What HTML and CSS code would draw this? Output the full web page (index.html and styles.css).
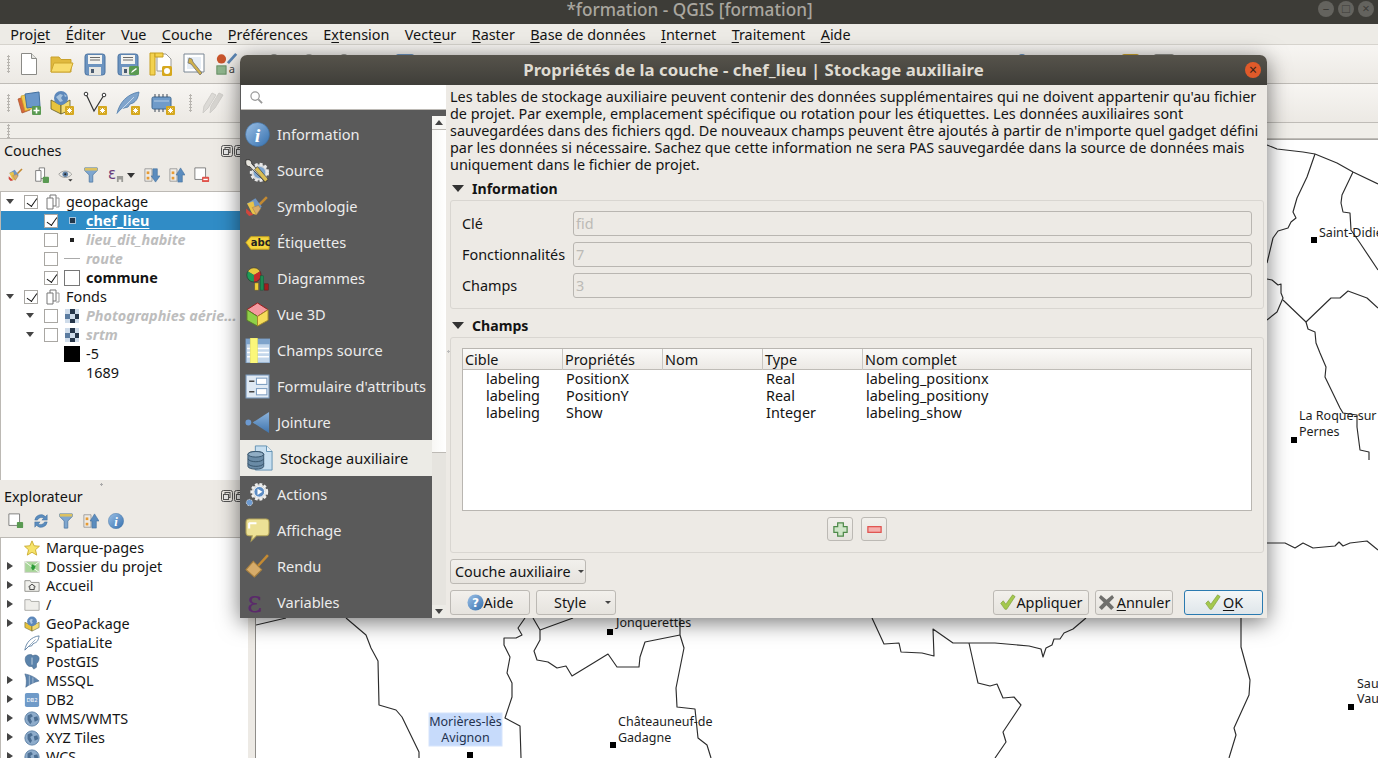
FILE: index.html
```html
<!DOCTYPE html>
<html lang="fr">
<head>
<meta charset="utf-8">
<title>*formation - QGIS [formation]</title>
<link rel="stylesheet" href="styles.css">
</head>
<body>
<svg class="defs" aria-hidden="true">
  <defs>
    <linearGradient id="gBlue" x1="0" y1="0" x2="0" y2="1"><stop offset="0" stop-color="#8db4dc"/><stop offset="1" stop-color="#3f74ad"/></linearGradient>
    <linearGradient id="gInfo" x1="0" y1="0" x2="1" y2="1"><stop offset="0" stop-color="#9cc0e6"/><stop offset="1" stop-color="#3570ae"/></linearGradient>
    <symbol id="i-new" viewBox="0 0 24 24"><path d="M4.500 1.500h10l5 5v16h-15z" fill="#fff" stroke="#8a8a86"/><path d="M14.500 1.500v5h5" fill="#e4e4e0" stroke="#8a8a86"/></symbol>
    <symbol id="i-open" viewBox="0 0 24 24"><path d="M1 20V5h8l2 2.500h10V20z" fill="#e0b93e" stroke="#c9a12c"/><path d="M1 20l3-9h19l-3 9z" fill="#f8dc6c" stroke="#cda62f"/></symbol>
    <symbol id="i-save" viewBox="0 0 24 24"><rect x="2" y="2" width="20" height="21" rx="2.500" fill="#6d94c0" stroke="#4b73a0"/><rect x="5" y="3" width="14" height="9" fill="#f3f3f0"/><path d="M7 5.500h10M7 8h10" stroke="#6a6a6a"/><rect x="6" y="15" width="12" height="8" fill="#e6e6e2"/><rect x="8" y="17" width="3" height="4" fill="#4a5b70"/></symbol>
    <symbol id="i-saveas" viewBox="0 0 24 24"><use href="#i-save"/><rect x="13" y="14" width="10" height="9" rx="1.500" fill="#5a9a52"/><path d="M15 21l1-2 4-3 1 1-4 3z" fill="#fff"/></symbol>
    <symbol id="i-layout" viewBox="0 0 24 24"><path d="M8 2h9l5 5v12H8z" fill="#fff" stroke="#9a9a96"/><path d="M1 1h5v22H1z" fill="#f3d250" stroke="#c69f20"/><path d="M6 1h8v4H6z" fill="#f3d250" stroke="#c69f20"/><rect x="13" y="14" width="10" height="10" rx="1.500" fill="#d6a81e"/><circle cx="18" cy="19" r="3" fill="#fff"/></symbol>
    <symbol id="i-style" viewBox="0 0 24 24"><path d="M2 2h20v18H2z" fill="#fff" stroke="#7b8794"/><path d="M5 5h14v12H5z" fill="#e6edf5"/><path d="M7 6l3 1 1 3 9 11-2 2-9-11-3-1z" fill="#cfb04c" stroke="#6a6a6a" stroke-width=".7"/></symbol>
    <symbol id="i-styleman" viewBox="0 0 26 24"><circle cx="7" cy="6.500" r="5" fill="#c9552c"/><path d="M14 11L23 1" stroke="#5b86b5" stroke-width="3"/><rect x="2" y="14" width="10" height="9" fill="#8fb58d" stroke="#5f8a5d"/><text x="15" y="22" font-size="12" fill="#444" font-family="Noto Sans, sans-serif">a</text></symbol>
    <symbol id="i-addlayer" viewBox="0 0 24 24"><path d="M1 8l8-3 4 14-8 3z" fill="#d6693a" stroke="#a84e26" stroke-width=".7"/><path d="M4 5l9-2 4 14-9 3z" fill="#f2c94f" stroke="#c89f24" stroke-width=".7"/><path d="M8 3l14-2 1 14-13 2z" fill="#6a97c9" stroke="#44719f"/><rect x="15" y="15" width="9" height="9" rx="1" fill="#5a9a52"/><path d="M19.500 16.500v6M16.500 19.500h6" stroke="#fff" stroke-width="1.600"/></symbol>
    <symbol id="i-ds" viewBox="0 0 24 24"><path d="M1 9l10 5v9L1 18z" fill="#e7c33d" stroke="#5f5a2a" stroke-width=".8"/><path d="M11 14l9-5v10l-9 4z" fill="#f3dc74" stroke="#5f5a2a" stroke-width=".8"/><circle cx="11" cy="7" r="7" fill="#5d88bb"/><path d="M6 6l4-3 3 1-2 3 2 3-3 1zM14 3l3 2-2 1z" fill="#a7c3de"/><rect x="15" y="15" width="9" height="9" rx="1" fill="#d6a81e"/><path d="M17 19.500h5M19.500 17v5M17.500 17.500l4 4M21.500 17.500l-4 4" stroke="#fff"/></symbol>
    <symbol id="i-vertex" viewBox="0 0 24 24"><path d="M3 3l8 17L21 4" fill="none" stroke="#333" stroke-width="1.200"/><circle cx="3" cy="3" r="1.800" fill="#fff" stroke="#333"/><circle cx="21" cy="4" r="1.800" fill="#fff" stroke="#333"/><rect x="15" y="15" width="9" height="9" rx="1" fill="#d6a81e"/><path d="M17 19.500h5M19.500 17v5M17.500 17.500l4 4M21.500 17.500l-4 4" stroke="#fff"/></symbol>
    <symbol id="i-feather" viewBox="0 0 24 24"><path d="M1 23C3 12 11 3 23 1c-1 7-3 9-6 11l-3 1-2 3-4 1-3 1z" fill="#7fa4cc" stroke="#4e7aa8" stroke-width=".8"/><path d="M1 23L18 6" stroke="#e5eef7" stroke-width=".7"/><rect x="15" y="15" width="9" height="9" rx="1" fill="#d6a81e"/><path d="M17 19.500h5M19.500 17v5M17.500 17.500l4 4M21.500 17.500l-4 4" stroke="#fff"/></symbol>
    <symbol id="i-chip" viewBox="0 0 24 24"><rect x="1" y="6" width="19" height="12" rx="1.500" fill="#6f9bc9" stroke="#3e678f"/><path d="M4 3v3M8 3v3M12 3v3M16 3v3M4 18v3M8 18v3M12 18v3" stroke="#3e4a58"/><path d="M3 10h15" stroke="#b5cde5"/><rect x="15" y="15" width="9" height="9" rx="1" fill="#d6a81e"/><path d="M17 19.500h5M19.500 17v5M17.500 17.500l4 4M21.500 17.500l-4 4" stroke="#fff"/></symbol>
    <symbol id="i-pencils" viewBox="0 0 24 24"><path d="M2 22l1-7L11 2l4 2-8 13z" fill="#dcdad6" stroke="#cfcdc9"/><path d="M9 22l1-7L18 2l4 2-8 13z" fill="#d6d4d0" stroke="#cfcdc9"/></symbol>
    <symbol id="i-brush" viewBox="0 0 24 24"><path d="M12 12L21 3" stroke="#c48a32" stroke-width="2.400"/><path d="M2 9l8-5 6 8-5 8z" fill="#6f95c2"/><path d="M2 9l5 10 4 1-3-13z" fill="#e8c34a"/><path d="M1 14l7 6-4 1-3-3z" fill="#d1463c"/><path d="M7 13l6-2 2 3-4 6z" fill="#d7ac6a" stroke="#a67d3e" stroke-width=".5"/></symbol>
    <symbol id="i-group" viewBox="0 0 16 16"><path d="M6 1h6v11H6z" fill="#fff" stroke="#777"/><path d="M3 4h6v11H3z" fill="#fff" stroke="#777"/><path d="M12 4h3v9h-3" fill="none" stroke="#999"/></symbol>
    <symbol id="i-groupadd" viewBox="0 0 18 18"><path d="M7 1h6v12H7z" fill="#fff" stroke="#777"/><path d="M3 4h6v12H3z" fill="#fff" stroke="#777"/><rect x="11" y="11" width="7" height="7" rx="1" fill="#5a9a52"/></symbol>
    <symbol id="i-eye" viewBox="0 0 22 18"><path d="M1 8c5-6 13-6 18 0-5 6-13 6-18 0z" fill="#e9e9e6" stroke="#8a8a86"/><circle cx="10" cy="8" r="3.800" fill="#5c7ea3"/><circle cx="10" cy="8" r="1.500" fill="#222"/><path d="M14 15h6l-3 3z" fill="#333"/></symbol>
    <symbol id="i-filter" viewBox="0 0 16 18"><path d="M1 1h14v3l-5 5v8H6V9L1 4z" fill="#7ea6cf" stroke="#557ea8"/><path d="M1 1h14v3H1z" fill="#dcc160"/></symbol>
    <symbol id="i-eps" viewBox="0 0 18 18"><text x="0" y="13" font-size="17" fill="#6a3d7c" font-family="DejaVu Sans, sans-serif">ε</text><path d="M10 10h7v7h-2v-3h-3v3h-2z" fill="#9a9a96"/></symbol>
    <symbol id="i-expand" viewBox="0 0 18 18"><path d="M1 2h8v14H1z" fill="none" stroke="#999"/><rect x="3" y="5" width="3" height="3" fill="#e89b33"/><rect x="3" y="11" width="3" height="3" fill="#e89b33"/><path d="M10 2h5v8h3l-5 7-5-7h2z" fill="#5b8cbe" stroke="#3b6a99" stroke-width=".6"/></symbol>
    <symbol id="i-collapse" viewBox="0 0 18 18"><path d="M1 2h8v14H1z" fill="none" stroke="#999"/><rect x="3" y="5" width="3" height="3" fill="#e89b33"/><rect x="3" y="11" width="3" height="3" fill="#e89b33"/><path d="M10 17h5V9h3l-5-8-5 8h2z" fill="#5b8cbe" stroke="#3b6a99" stroke-width=".6"/></symbol>
    <symbol id="i-rm" viewBox="0 0 18 18"><path d="M1 1h12v13H1z" fill="#fff" stroke="#777"/><rect x="9" y="11" width="8" height="6" rx="1" fill="#e0534b"/><path d="M10.500 14h5" stroke="#fff" stroke-width="1.500"/></symbol>
    <symbol id="i-addnew" viewBox="0 0 18 18"><path d="M1 1h12v13H1z" fill="#fff" stroke="#777"/><rect x="10" y="10" width="7" height="7" rx="1" fill="#5a9a52"/></symbol>
    <symbol id="i-refresh" viewBox="0 0 18 18"><path d="M2 8a7 7 0 0 1 12-4l2-2v6h-6l2-2a4.500 4.500 0 0 0-7 2zM16 10a7 7 0 0 1-12 4l-2 2v-6h6l-2 2a4.500 4.500 0 0 0 7-2z" fill="#5b8cbe" stroke="#3b6a99" stroke-width=".5"/></symbol>
    <symbol id="i-infos" viewBox="0 0 24 24"><circle cx="12" cy="12" r="11.500" fill="url(#gInfo)" stroke="#3e6f9f" stroke-width=".6"/><text x="12" y="19" text-anchor="middle" font-size="19" font-weight="700" font-style="italic" fill="#fff" font-family="Liberation Serif, serif">i</text></symbol>
    <symbol id="i-source" viewBox="0 0 26 26"><circle cx="15" cy="15" r="8.500" fill="#cfd3d6" stroke="#e9e9e9" stroke-width="3" stroke-dasharray="3 2"/><circle cx="15" cy="15" r="6" fill="#7da5cf"/><path d="M1 2c4-1 6 1 6 4l16 17-2 2L5 9C2 9 0 7 1 2z" fill="#e6e4dd" stroke="#222" stroke-width=".8"/><path d="M10 12l3-3 11 13-3 3z" fill="#d9bd53" stroke="#333" stroke-width=".6"/></symbol>
    <symbol id="i-abc" viewBox="0 0 26 16"><path d="M1 8l5-6h19v13H6z" fill="#f4d53c" stroke="#caa61d"/><text x="6" y="12" font-size="10.500" font-weight="700" fill="#222" font-family="DejaVu Sans, sans-serif">abc</text></symbol>
    <symbol id="i-diag" viewBox="0 0 26 28"><path d="M9 10L2 6a8 8 0 0 1 14 0z" fill="#e9c93e"/><path d="M9 10v8a8 8 0 0 1-7-12z" fill="#1e9a58"/><path d="M9 10l7-4a8 8 0 0 1-7 12z" fill="#c62b2b"/><circle cx="9" cy="10" r="8" fill="none" stroke="#222" stroke-width=".6"/><rect x="10" y="19" width="4" height="8" fill="#efce38" stroke="#7a6a1c" stroke-width=".5"/><rect x="16" y="11" width="4" height="16" fill="#1f8a52" stroke="#125533" stroke-width=".5"/><rect x="21" y="20" width="4" height="7" fill="#a31d1d" stroke="#5e1010" stroke-width=".5"/></symbol>
    <symbol id="i-cube" viewBox="0 0 24 26"><path d="M12 1l11 7-11 7L1 8z" fill="#f59aa0" stroke="#a01c1c"/><path d="M1 8l11 7v10L1 19z" fill="#8fd048" stroke="#5a7f26"/><path d="M23 8L12 15v10l11-6z" fill="#f5dc5a" stroke="#a0882c"/></symbol>
    <symbol id="i-fields" viewBox="0 0 24 24"><rect x="1" y="1" width="23" height="23" fill="#c4d7eb" stroke="#7597bd"/><rect x="1" y="1" width="23" height="5" fill="#7ea3cb"/><path d="M2 10h21M2 14h21M2 18h21" stroke="#fff" stroke-width="1.400"/><rect x="5" y="0" width="7" height="25" fill="#fbf77a" stroke="#e3dc55" stroke-width=".5"/></symbol>
    <symbol id="i-form" viewBox="0 0 24 24"><rect x="1" y="1" width="22" height="22" fill="#dfe9f3" stroke="#7c9dc0"/><rect x="11" y="4" width="10" height="6" fill="#fff" stroke="#7c9dc0"/><rect x="11" y="14" width="10" height="6" fill="#fff" stroke="#7c9dc0"/><path d="M4 7h5M4 17h5" stroke="#444" stroke-width="1.500"/></symbol>
    <symbol id="i-join" viewBox="0 0 26 24"><circle cx="3.500" cy="12" r="3" fill="#6d9ad0"/><path d="M25 1v22L8 12z" fill="url(#gBlue)"/></symbol>
    <symbol id="i-aux" viewBox="0 0 28 28"><path d="M9 1h12l6 6v20H9z" fill="#c7dff0" stroke="#5f8fb0"/><path d="M21 1v6h6" fill="#e8f2f8" stroke="#5f8fb0"/><path d="M1 10c0-4 17-4 17 0v13c0 4-17 4-17 0z" fill="#6a8ba6" stroke="#35526a"/><ellipse cx="9.500" cy="10" rx="8.500" ry="3" fill="#90adc4" stroke="#35526a"/><path d="M1 15c2 4 15 4 17 0M1 20c2 4 15 4 17 0" fill="none" stroke="#35526a"/></symbol>
    <symbol id="i-actions" viewBox="0 0 26 28"><circle cx="15" cy="11" r="8.500" fill="#d6d6d3" stroke="#efefef" stroke-width="3" stroke-dasharray="3 2"/><circle cx="15" cy="11" r="6" fill="#5c8cc4" stroke="#fff"/><path d="M13 7.500v7l5.500-3.500z" fill="#fff"/><circle cx="4" cy="23" r="3.500" fill="#6d9ad0" stroke="#cfd3d6" stroke-dasharray="2 1"/></symbol>
    <symbol id="i-bubble" viewBox="0 0 24 24"><path d="M4 1h16c2 0 3 1 3 3v10c0 2-1 3-3 3H11l-5 5 1-5H4c-2 0-3-1-3-3V4c0-2 1-3 3-3z" fill="#ece196" stroke="#b5a65a"/><path d="M4 4h7v2H5v4H3V5z" fill="#fff"/></symbol>
    <symbol id="i-broom" viewBox="0 0 24 24"><path d="M12 12L22 1" stroke="#c48a32" stroke-width="2.400"/><path d="M1 15l7-8 8 8-7 7z" fill="#d7ac6a" stroke="#a9803f"/></symbol>
    <symbol id="i-eps2" viewBox="0 0 24 24"><text x="2" y="21" font-size="28" fill="#5a2a6a" font-family="DejaVu Serif, serif">ε</text></symbol>
    <symbol id="i-star" viewBox="0 0 18 18"><path d="M9 1l2.400 5.500 6 .5-4.500 4 1.400 6L9 13.800 3.700 17l1.400-6L.6 7l6-.5z" fill="#f6e36a" stroke="#c9a92c"/></symbol>
    <symbol id="i-projdir" viewBox="0 0 18 18"><rect x="1" y="3" width="16" height="12" fill="#a9d69a" stroke="#cfcfc9"/><path d="M1 3l16 12M17 3L9 9" stroke="#fff"/><path d="M9 6l4 2-1 3-2 2-2-3z" fill="#2d9a3a"/></symbol>
    <symbol id="i-home" viewBox="0 0 18 18"><path d="M1 15V3h6l1 2h9v10z" fill="#f0f0ec" stroke="#8d8d88"/><path d="M5 10l4-3 4 3M6.500 9.500V13h5V9.500" fill="none" stroke="#333"/></symbol>
    <symbol id="i-folder" viewBox="0 0 18 18"><path d="M1 15V3h6l1 2h9v10z" fill="#efeeea" stroke="#a7a7a2"/></symbol>
    <symbol id="i-gpkg" viewBox="0 0 18 18"><path d="M1 7l8 4v6l-8-4z" fill="#e7c33d" stroke="#5f5a2a" stroke-width=".6"/><path d="M9 11l8-4v6l-8 4z" fill="#f3dc74" stroke="#5f5a2a" stroke-width=".6"/><circle cx="9" cy="6" r="5.500" fill="#5d88bb"/><path d="M6 5l2-2 2 1-1 2 1 2-2 1z" fill="#a7c3de"/></symbol>
    <symbol id="i-spatial" viewBox="0 0 18 18"><path d="M1 17C2 9 8 2 17 1c-1 5-2 7-5 8l-2 1-1 2-4 1z" fill="#fff" stroke="#5d7fa3"/><path d="M1 17L13 5" stroke="#5d7fa3" stroke-width=".7"/></symbol>
    <symbol id="i-pg" viewBox="0 0 18 18"><path d="M2 3c2-3 7-3 8-1 3-2 7 0 7 3 0 3-2 5-3 6v4l-3 2-2-3H6C3 13 0 7 2 3z" fill="#5b83ab" stroke="#3d5f83" stroke-width=".6"/><path d="M9 4v8" stroke="#cfdae5"/></symbol>
    <symbol id="i-mssql" viewBox="0 0 18 18"><path d="M1 1c6 1 12 4 16 8-5 1-11 4-15 7 1-5 1-10-1-15z" fill="#5d84ad" stroke="#3e6188" stroke-width=".6"/><path d="M6 3v11M10 5v7" stroke="#cdd9e5" stroke-width=".7"/></symbol>
    <symbol id="i-db2" viewBox="0 0 18 18"><rect x="1" y="1" width="16" height="16" rx="2" fill="#6f9ac8"/><text x="9" y="11.500" text-anchor="middle" font-size="6" fill="#fff" font-family="DejaVu Sans, sans-serif">DB2</text></symbol>
    <symbol id="i-globe" viewBox="0 0 18 18"><circle cx="9" cy="9" r="8" fill="#8eaccb" stroke="#567ca3"/><path d="M4 5l4-2 2 3-3 2 2 4-2 3-3-5zM11 7l4-1 1 4-4 2z" fill="#4c6e92"/></symbol>
    <symbol id="i-ok" viewBox="0 0 20 20"><path d="M2 11l3-3 3 4 8-11 3 2-10 15h-2z" fill="#a4c84e" stroke="#7a9a36" stroke-width=".7"/></symbol>
    <symbol id="i-x" viewBox="0 0 18 18"><path d="M3 1l6 5 6-5 2 3-5 5 5 5-3 3-5-5-5 5-3-3 5-5-5-5z" fill="#6f6f6c"/></symbol>
    <symbol id="i-help" viewBox="0 0 18 18"><circle cx="9" cy="9" r="8.500" fill="url(#gInfo)"/><text x="9" y="14" text-anchor="middle" font-size="13" font-weight="700" fill="#fff" font-family="DejaVu Sans, sans-serif">?</text></symbol>
    <symbol id="i-plus" viewBox="0 0 18 18"><path d="M6 2h6v4h4v6h-4v4H6v-4H2V6h4z" fill="#cfe5c8" stroke="#4e8a4a" stroke-width="1.300"/></symbol>
    <symbol id="i-minus" viewBox="0 0 18 18"><rect x="2" y="6" width="14" height="6" fill="#f4b0ae" stroke="#e0504c" stroke-width="1.300"/></symbol>
    <symbol id="i-raster" viewBox="0 0 16 16"><rect x="1" y="1" width="14" height="14" fill="#cfdcea"/><rect x="6" y="1" width="5" height="5" fill="#26364a"/><rect x="1" y="6" width="5" height="5" fill="#5a7ba0"/><rect x="11" y="6" width="4" height="5" fill="#26364a"/><rect x="6" y="11" width="5" height="4" fill="#26364a"/></symbol>
    <symbol id="i-dock" viewBox="0 0 12 12"><rect x=".5" y=".5" width="11" height="11" rx="2" fill="none" stroke="#555"/><rect x="4" y="2.500" width="5" height="5" fill="none" stroke="#555"/><rect x="2.500" y="4.500" width="5" height="5" fill="#eee" stroke="#555"/></symbol>
  </defs>
</svg>

<div class="app">
  <header class="wintitle">
    <span class="wintitle-text">*formation - QGIS [formation]</span>
    <div class="winbtns">
      <span class="winbtn">&#8211;</span><span class="winbtn">&#9633;</span><span class="winbtn">&#215;</span>
    </div>
  </header>

  <nav class="menubar">
    <span class="mi">Proj<u>e</u>t</span>
    <span class="mi"><u>É</u>diter</span>
    <span class="mi">V<u>u</u>e</span>
    <span class="mi"><u>C</u>ouche</span>
    <span class="mi"><u>P</u>références</span>
    <span class="mi">E<u>x</u>tension</span>
    <span class="mi">Vect<u>e</u>ur</span>
    <span class="mi"><u>R</u>aster</span>
    <span class="mi"><u>B</u>ase de données</span>
    <span class="mi"><u>I</u>nternet</span>
    <span class="mi"><u>T</u>raitement</span>
    <span class="mi"><u>A</u>ide</span>
  </nav>

  <div class="toolbar tb1">
    <span class="grip"></span>
    <svg class="tbi"><use href="#i-new"/></svg>
    <svg class="tbi"><use href="#i-open"/></svg>
    <svg class="tbi"><use href="#i-save"/></svg>
    <svg class="tbi"><use href="#i-saveas"/></svg>
    <svg class="tbi"><use href="#i-layout"/></svg>
    <svg class="tbi"><use href="#i-style"/></svg>
    <svg class="tbi"><use href="#i-styleman"/></svg>
    <span class="peek p-a"></span>
    <span class="peek p-b"></span>
    <span class="peek p-c"></span>
    <span class="peek p-d"></span>
    <span class="peek p-e"></span>
    <span class="peek p-f"></span>
    <span class="peek p-g"></span>
  </div>
  <div class="toolbar tb2">
    <span class="grip"></span>
    <svg class="tbi"><use href="#i-addlayer"/></svg>
    <svg class="tbi"><use href="#i-ds"/></svg>
    <svg class="tbi"><use href="#i-vertex"/></svg>
    <svg class="tbi"><use href="#i-feather"/></svg>
    <svg class="tbi chip"><use href="#i-chip"/></svg>
    <span class="grip grip-mid"></span>
    <svg class="tbi"><use href="#i-pencils"/></svg>
  </div>
  <div class="toolbar tb3"><span class="grip"></span></div>

  <main class="workspace">
    <aside class="docks">
      <section class="dock dock-layers">
        <div class="dock-title title-layers"><span>Couches</span><svg class="dockbtn"><use href="#i-dock"/></svg><svg class="dockbtn"><use href="#i-dock"/></svg></div>
        <div class="dock-tools layers-tools">
          <svg class="dti"><use href="#i-brush"/></svg>
          <svg class="dti"><use href="#i-groupadd"/></svg>
          <svg class="dti"><use href="#i-eye"/></svg>
          <svg class="dti"><use href="#i-filter"/></svg>
          <svg class="dti"><use href="#i-eps"/></svg>
          <span class="caret"></span>
          <svg class="dti"><use href="#i-expand"/></svg>
          <svg class="dti"><use href="#i-collapse"/></svg>
          <svg class="dti"><use href="#i-rm"/></svg>
        </div>
        <div class="tree tree-layers">
          <div class="row l0"><span class="arr open"></span><span class="chk on"></span><svg class="ric"><use href="#i-group"/></svg><span>geopackage</span></div>
          <div class="row l1 sel"><span class="arr none"></span><span class="chk on"></span><span class="ric sym"><span class="dot big"></span></span><span class="b u">chef_lieu</span></div>
          <div class="row l1"><span class="arr none"></span><span class="chk"></span><span class="ric sym"><span class="dot"></span></span><span class="off">lieu_dit_habite</span></div>
          <div class="row l1"><span class="arr none"></span><span class="chk"></span><span class="ric sym"><span class="dash"></span></span><span class="off">route</span></div>
          <div class="row l1"><span class="arr none"></span><span class="chk on"></span><span class="ric sym"><span class="poly"></span></span><span class="b">commune</span></div>
          <div class="row l0"><span class="arr open"></span><span class="chk on"></span><svg class="ric"><use href="#i-group"/></svg><span>Fonds</span></div>
          <div class="row l1"><span class="arr open"></span><span class="chk"></span><svg class="ric"><use href="#i-raster"/></svg><span class="off">Photographies aérie...</span></div>
          <div class="row l1"><span class="arr open"></span><span class="chk"></span><svg class="ric"><use href="#i-raster"/></svg><span class="off">srtm</span></div>
          <div class="row l2"><span class="ramp"></span><span>-5</span></div>
          <div class="row l2"><span class="ramp blank"></span><span>1689</span></div>
        </div>
      </section>
      <div class="dock-split"></div>
      <section class="dock dock-browser">
        <div class="dock-title title-browser"><span>Explorateur</span><svg class="dockbtn"><use href="#i-dock"/></svg><svg class="dockbtn"><use href="#i-dock"/></svg></div>
        <div class="dock-tools browser-tools">
          <svg class="dti"><use href="#i-addnew"/></svg>
          <svg class="dti"><use href="#i-refresh"/></svg>
          <svg class="dti"><use href="#i-filter"/></svg>
          <svg class="dti"><use href="#i-collapse"/></svg>
          <svg class="dti"><use href="#i-infos"/></svg>
        </div>
        <div class="tree tree-browser">
          <div class="row l0"><span class="arr none"></span><svg class="ric"><use href="#i-star"/></svg><span>Marque-pages</span></div>
          <div class="row l0"><span class="arr"></span><svg class="ric"><use href="#i-projdir"/></svg><span>Dossier du projet</span></div>
          <div class="row l0"><span class="arr"></span><svg class="ric"><use href="#i-home"/></svg><span>Accueil</span></div>
          <div class="row l0"><span class="arr"></span><svg class="ric"><use href="#i-folder"/></svg><span>/</span></div>
          <div class="row l0"><span class="arr"></span><svg class="ric"><use href="#i-gpkg"/></svg><span>GeoPackage</span></div>
          <div class="row l0"><span class="arr none"></span><svg class="ric"><use href="#i-spatial"/></svg><span>SpatiaLite</span></div>
          <div class="row l0"><span class="arr none"></span><svg class="ric"><use href="#i-pg"/></svg><span>PostGIS</span></div>
          <div class="row l0"><span class="arr"></span><svg class="ric"><use href="#i-mssql"/></svg><span>MSSQL</span></div>
          <div class="row l0"><span class="arr"></span><svg class="ric"><use href="#i-db2"/></svg><span>DB2</span></div>
          <div class="row l0"><span class="arr"></span><svg class="ric"><use href="#i-globe"/></svg><span>WMS/WMTS</span></div>
          <div class="row l0"><span class="arr"></span><svg class="ric"><use href="#i-globe"/></svg><span>XYZ Tiles</span></div>
          <div class="row l0"><span class="arr"></span><svg class="ric"><use href="#i-globe"/></svg><span>WCS</span></div>
        </div>
      </section>
    </aside>
    <div class="vsplit"></div>
    <div class="map">
      <svg class="mapsvg" viewBox="256 140 1122 618" preserveAspectRatio="xMinYMin slice">
        <g class="borders">
          <polyline points="1267,145 1277,149 1303,152 1315,154 1337,163 1353,172 1378,184"/>
          <polyline points="1315,154 1307,177 1297,198 1293,212 1296,218 1291,222 1288,228 1278,231 1273,238 1267,263"/>
          <polyline points="1353,172 1342,195 1341,203 1343,212 1350,213 1351,230 1360,243 1378,270"/>
          <polyline points="1267,279 1272,280 1278,285 1281,284 1281,293 1283,298 1277,312 1267,320"/>
          <polyline points="1283,300 1306,322 1331,298 1340,298 1348,291 1367,298 1378,308"/>
          <polyline points="1306,322 1308,329 1315,332 1316,343 1320,353 1326,367 1325,377 1340,408 1343,413 1357,415 1357,427 1360,450 1369,452 1369,460"/>
          <polyline points="1267,543 1285,543 1295,548 1303,543 1313,548 1335,546 1339,542 1343,546 1350,543 1367,541 1378,550"/>
          <polyline points="872,618 884,644 899,643 901,652 922,653 934,656 933,629 953,643 995,643 1029,646 1041,649 1043,657 1046,648 1052,645 1054,639 1060,639 1064,633 1073,629 1086,618"/>
          <polyline points="969,643 975,670 978,683 990,686 997,684 1003,698 1014,697 1021,705 1003,732 1006,742 995,758"/>
          <polyline points="1241,618 1241,647 1250,680 1249,695 1234,728 1236,735 1229,758"/>
          <polyline points="256,625 286,618"/>
          <polyline points="346,618 366,635 371,648 378,661 379,705 396,710 402,717 419,752 419,758"/>
          <polyline points="525,618 518,628 522,635 516,638 504,638 504,645 510,657 507,673 512,683 512,697 505,718 520,726 521,758"/>
          <polyline points="533,618 540,630 540,640 534,651 537,660 548,662 557,668 566,666 572,676 595,662 608,654 617,667 639,667 640,657 645,642 680,635"/>
          <polyline points="540,630 573,618"/>
          <polyline points="680,618 680,635 684,648 679,673 676,688 677,707 695,709 698,738 707,745 711,758"/>
        </g>
        <rect class="lblbox" x="429" y="713" width="73" height="33"/>
        <g class="pins">
          <rect x="1311" y="237" width="6" height="6"/>
          <rect x="1291" y="437" width="6" height="6"/>
          <rect x="1348" y="704" width="6" height="6"/>
          <rect x="607" y="629" width="6" height="6"/>
          <rect x="610" y="742" width="6" height="6"/>
          <rect x="467" y="752" width="6" height="6"/>
        </g>
        <g class="labels">
          <text x="1319" y="237">Saint-Didier</text>
          <text x="1299" y="420">La Roque-sur</text>
          <text x="1299" y="436">Pernes</text>
          <text x="1357" y="688">Sau</text>
          <text x="1357" y="703">Vau</text>
          <text x="616" y="627">Jonquerettes</text>
          <text x="618" y="726">Châteauneuf-de</text>
          <text x="618" y="742">Gadagne</text>
          <text class="hl" x="465.500" y="726" text-anchor="middle">Morières-lès</text>
          <text class="hl" x="465.500" y="742" text-anchor="middle">Avignon</text>
        </g>
      </svg>
    </div>
  </main>

  <div class="dialog">
    <div class="dlg-title">
      <span>Propriétés de la couche - chef_lieu | Stockage auxiliaire</span>
      <span class="dlg-close">&#215;</span>
    </div>
    <div class="dlg-body">
      <aside class="side">
        <div class="search">
          <svg class="search-ic" viewBox="0 0 14 14"><circle cx="5.500" cy="5.500" r="4.500" fill="none" stroke="#999" stroke-width="1.300"/><path d="M9 9l4 4" stroke="#999" stroke-width="2"/></svg>
        </div>
        <div class="side-main">
          <ul class="navlist">
            <li class="nav"><svg class="nic"><use href="#i-infos"/></svg>Information</li>
            <li class="nav"><svg class="nic"><use href="#i-source"/></svg>Source</li>
            <li class="nav"><svg class="nic"><use href="#i-brush"/></svg>Symbologie</li>
            <li class="nav"><svg class="nic"><use href="#i-abc"/></svg>Étiquettes</li>
            <li class="nav"><svg class="nic"><use href="#i-diag"/></svg>Diagrammes</li>
            <li class="nav"><svg class="nic"><use href="#i-cube"/></svg>Vue 3D</li>
            <li class="nav"><svg class="nic"><use href="#i-fields"/></svg>Champs source</li>
            <li class="nav"><svg class="nic"><use href="#i-form"/></svg>Formulaire d'attributs</li>
            <li class="nav"><svg class="nic"><use href="#i-join"/></svg>Jointure</li>
            <li class="nav active"><svg class="nic"><use href="#i-aux"/></svg>Stockage auxiliaire</li>
            <li class="nav"><svg class="nic"><use href="#i-actions"/></svg>Actions</li>
            <li class="nav"><svg class="nic"><use href="#i-bubble"/></svg>Affichage</li>
            <li class="nav"><svg class="nic"><use href="#i-broom"/></svg>Rendu</li>
            <li class="nav"><svg class="nic"><use href="#i-eps2"/></svg>Variables</li>
          </ul>
          <div class="sb">
            <span class="sb-btn"><span class="tri-up"></span></span>
            <span class="sb-thumb"></span>
            <span class="sb-track"></span>
            <span class="sb-btn bottom"><span class="tri-down"></span></span>
          </div>
        </div>
      </aside>
      <div class="splitgrip"></div>
      <div class="content">
        <div class="para">
          <span>Les tables de stockage auxiliaire peuvent contenir des données supplémentaires qui ne doivent appartenir qu'au fichier</span>
          <span>de projet. Par exemple, emplacement spécifique ou rotation pour les étiquettes. Les données auxiliaires sont</span>
          <span>sauvegardées dans des fichiers qgd. De nouveaux champs peuvent être ajoutés à partir de n'importe quel gadget défini</span>
          <span>par les données si nécessaire. Sachez que cette information ne sera PAS sauvegardée dans la source de données mais</span>
          <span>uniquement dans le fichier de projet.</span>
        </div>
        <h3 class="ghead h-info"><span class="tri"></span>Information</h3>
        <section class="gbox info-box">
          <div class="frow"><label>Clé</label><div class="inp">fid</div></div>
          <div class="frow"><label>Fonctionnalités</label><div class="inp">7</div></div>
          <div class="frow"><label>Champs</label><div class="inp">3</div></div>
        </section>
        <h3 class="ghead h-champs"><span class="tri"></span>Champs</h3>
        <section class="gbox champs-box">
          <div class="table">
            <div class="thead"><span>Cible</span><span>Propriétés</span><span>Nom</span><span>Type</span><span>Nom complet</span></div>
            <div class="trow"><span>labeling</span><span>PositionX</span><span></span><span>Real</span><span>labeling_positionx</span></div>
            <div class="trow"><span>labeling</span><span>PositionY</span><span></span><span>Real</span><span>labeling_positiony</span></div>
            <div class="trow"><span>labeling</span><span>Show</span><span></span><span>Integer</span><span>labeling_show</span></div>
          </div>
          <div class="tbl-btns">
            <button class="btn ib"><svg class="bic"><use href="#i-plus"/></svg></button>
            <button class="btn ib"><svg class="bic"><use href="#i-minus"/></svg></button>
          </div>
        </section>
        <button class="btn aux-btn">Couche auxiliaire<span class="caret small"></span></button>
        <div class="footer">
          <button class="btn f-aide"><svg class="bic"><use href="#i-help"/></svg>Aide</button>
          <button class="btn f-style">Style<span class="caret small end"></span></button>
          <span class="spacer"></span>
          <button class="btn f-apply"><svg class="bic"><use href="#i-ok"/></svg>Appliquer</button>
          <button class="btn f-cancel"><svg class="bic"><use href="#i-x"/></svg><span class="btn-label"><u>A</u>nnuler</span></button>
          <button class="btn f-ok"><svg class="bic"><use href="#i-ok"/></svg><span><u>O</u>K</span></button>
        </div>
      </div>
    </div>
  </div>
</div>
</body>
</html>
```

FILE: styles.css
```css
* { box-sizing: border-box; }
html, body { margin: 0; padding: 0; height: 100%; overflow: hidden; }
body {
  font-family: "Noto Sans", "Open Sans", sans-serif;
  font-size: 14.400px;
  color: #141414;
  background: #edeae5;
  line-height: 19px;
}
u { text-underline-offset: 2px; }
.defs { position: absolute; width: 0; height: 0; }
.app { position: relative; width: 1378px; height: 758px; display: flex; flex-direction: column; overflow: hidden; }

/* Main window chrome */
.wintitle { height: 24px; flex: none; background: #3d3c37; position: relative; display: flex; justify-content: center; align-items: center; padding: 0 0 6px 1px; }
.wintitle-text { color: #a9a69f; font-size: 17.200px; font-weight: 500; line-height: 17px; }
.winbtns { position: absolute; right: 4px; top: 1px; display: flex; gap: 4px; }
.winbtn { width: 16px; height: 16px; border-radius: 50%; background: #64635e; color: #3c3b37; font-size: 13px; line-height: 15px; text-align: center; }

.menubar { height: 21px; flex: none; display: flex; padding-left: 2.500px; background: #edebe6; align-items: center; border-bottom: 1px solid #d6d3cd; }
.mi { padding: 0 7.700px; white-space: nowrap; }

.toolbar { flex: none; display: flex; align-items: center; background: linear-gradient(#f7f5f2, #ece9e4); border-bottom: 1px solid #bfbcb7; padding-left: 7px; }
.tb1 { height: 39px; }
.tb2 { height: 39px; }
.tb3 { height: 16px; background: #f0eee9; }
.grip { width: 3px; height: 18px; margin-right: 7px; background-image: radial-gradient(circle, #b8b5b0 1px, transparent 1.200px); background-size: 3px 3px; flex: none; }
.tb3 .grip { height: 14px; }
.tbi { width: 24px; height: 24px; margin-right: 9px; flex: none; }
.chip { margin-left: 2px; }
.grip-mid { margin: 0 9px 0 5px; }

/* Tops of toolbar icons that stick out above the dialog */
.peek { height: 21px; flex: none; border-radius: 2px; }
.p-a { width: 6px; margin-left: 23px; background: #9a9a96; }
.p-b { width: 6px; margin-left: 29px; background: #a9a9a5; }
.p-c { width: 6px; margin-left: 29px; background: #9a9a96; }
.p-d { width: 18px; margin-left: 49px; background: #6d94c0; }
.p-e { width: 6px; margin-left: 605px; background: #6d94c0; }
.p-f { width: 17px; margin-left: 97px; background: #c9a12c; }
.p-g { width: 20px; margin-left: 15px; background: #8f8f8b; }

/* Workspace */
.workspace { flex: 1; display: flex; min-height: 0; }
.docks { width: 248px; flex: none; display: flex; flex-direction: column; background: #edeae5; }
.dock-title { display: flex; align-items: center; padding: 0 2px 0 4px; gap: 1px; }
.title-layers { height: 23px; }
.title-browser { height: 20px; padding-bottom: 2px; }
.dock-title span { flex: 1; }
.dockbtn { width: 12px; height: 12px; }
.dock-tools { display: flex; align-items: center; gap: 9px; }
.layers-tools { height: 29px; padding: 0 0 3px 8px; }
.browser-tools { height: 30px; padding: 0 0 3px 8px; }
.dti { width: 16px; height: 16px; flex: none; }
.caret { width: 0; height: 0; border-left: 4.500px solid transparent; border-right: 4.500px solid transparent; border-top: 5px solid #333; margin-left: -6px; }
.caret.small { border-left-width: 3px; border-right-width: 3px; border-top-width: 3px; margin: 0 0 0 7px; border-top-color: #444; }
.caret.small.end { margin-left: auto; }

.tree { background: #fff; border-top: 1px solid #bcb9b4; border-left: 1px solid #bcb9b4; overflow: hidden; white-space: nowrap; }
.tree-layers { height: 289px; }
.dock-browser { flex: 1; min-height: 0; display: flex; flex-direction: column; }
.tree-browser { flex: 1; min-height: 0; }
.dock-split { height: 7px; flex: none; background: #edeae5 radial-gradient(circle, #aaa 1px, transparent 1.200px) 100px 3px / 3px 3px no-repeat; }
.row { height: 19px; display: flex; align-items: center; padding-left: 3px; }
.l1 { padding-left: 23px; }
.l2 { padding-left: 63px; }
.sel { background: #308cc6; color: #fff; }
.arr { width: 20px; height: 19px; flex: none; position: relative; }
.arr::after { content: ""; position: absolute; left: 3px; top: 5px; border-left: 6px solid #444; border-top: 4.500px solid transparent; border-bottom: 4.500px solid transparent; }
.arr.open::after { left: 2px; top: 7px; border-left: 4.500px solid transparent; border-right: 4.500px solid transparent; border-top: 5.500px solid #444; border-bottom: 0; }
.arr.none::after { display: none; }
.chk { width: 14px; height: 14px; flex: none; background: #fff; border: 1px solid #a9a7a3; margin-right: 6px; position: relative; }
.chk.on::after { content: ""; position: absolute; left: 3.500px; top: .5px; width: 4.500px; height: 9px; border-right: 1.800px solid #111; border-bottom: 1.800px solid #111; transform: rotate(35deg); }
.ric { width: 16px; height: 16px; flex: none; margin-right: 6px; }
.sym { display: flex; align-items: center; justify-content: center; }
.dot { width: 4px; height: 4px; background: #222; }
.dot.big { width: 7px; height: 7px; background: #22364a; border: 1px solid #a8c4dc; }
.dash { width: 16px; height: 1px; background: #aaa; }
.poly { width: 16px; height: 16px; border: 1px solid #777; background: #fff; }
.b { font-weight: 700; }
.u { text-decoration: underline; text-underline-offset: 2px; }
.off { color: #bdbdbd; font-weight: 700; font-style: italic; }
.ramp { width: 16px; height: 16px; background: #000; margin-right: 6px; flex: none; }
.ramp.blank { background: transparent; }
.vsplit { width: 8px; flex: none; background: #edeae5; border-right: 1px solid #8f8d89; }
.map { flex: 1; min-width: 0; background: #fff; position: relative; overflow: hidden; border-top: 1px solid #a8a6a2; }
.mapsvg { display: block; width: 100%; height: 100%; font-family: "Noto Sans", sans-serif; font-size: 12.500px; }
.borders polyline { fill: none; stroke: #2c2c2c; stroke-width: 1.150; stroke-linejoin: round; }
.pins rect { fill: #000; }
.labels text { fill: #1d1d1d; }
.labels text.hl { fill: #24324f; }
.lblbox { fill: #c7dbfb; stroke: #d6e4fc; }

/* Dialog (window over the desktop) */
.dialog { position: absolute; left: 240px; top: 55px; width: 1027px; height: 563px; display: flex; flex-direction: column; background: #edeae5; border-radius: 7px 7px 0 0; box-shadow: 0 4px 22px rgba(0,0,0,.55); }
.dlg-title { height: 30px; flex: none; padding-bottom: 2px; background: linear-gradient(#56534b, #3f3e39); border-radius: 7px 7px 0 0; display: flex; align-items: center; justify-content: center; position: relative; color: #dfdbd2; font-weight: 700; font-size: 16.800px; }
.dlg-close { position: absolute; right: 6px; top: 7px; width: 16px; height: 16px; border-radius: 50%; background: #e05a2a; color: #3a2216; font-size: 14px; line-height: 15px; text-align: center; font-weight: 400; }
.dlg-body { flex: 1; display: flex; min-height: 0; }
.side { width: 206px; flex: none; display: flex; flex-direction: column; background: #5a5a5a; }
.search { height: 25px; margin-left: 1px; flex: none; background: #fff; border-bottom: 1px solid #bdbab5; display: flex; align-items: center; padding-left: 9px; }
.search-ic { width: 13px; height: 13px; }
.side-main { flex: 1; display: flex; min-height: 0; padding-top: 6px; }
.navlist { list-style: none; margin: 0; padding: 0; flex: 1; color: #ececec; overflow: hidden; font-size: 14.600px; }
.nav { height: 36px; display: flex; align-items: center; padding-left: 5px; white-space: nowrap; }
.nic { width: 25px; height: 25px; margin-right: 7px; flex: none; }
.nav.active { background: #ecebe6; color: #141414; padding-left: 7px; }
.nav.active .nic { width: 26px; height: 26px; margin-right: 7px; }
.sb { width: 14px; flex: none; display: flex; flex-direction: column; background: #e6e4df; }
.sb-btn { height: 14px; flex: none; background: #f7f6f3; border-bottom: 1px solid #bdbab5; display: flex; align-items: center; justify-content: center; }
.sb-btn.bottom { border-bottom: 0; height: 13px; background: #ecebe6; }
.sb-thumb { height: 323px; flex: none; background: linear-gradient(90deg, #f8f7f4, #fff); border-bottom: 1px solid #bdbab5; }
.sb-track { flex: 1; }
.tri-up { border-left: 4.500px solid transparent; border-right: 4.500px solid transparent; border-bottom: 5px solid #444; }
.tri-down { border-left: 4.500px solid transparent; border-right: 4.500px solid transparent; border-top: 5px solid #444; }
.splitgrip { width: 4px; flex: none; background: radial-gradient(circle, #bbb 1px, transparent 1.200px) center / 3px 3px no-repeat; }
.content { flex: 1; min-width: 0; display: flex; flex-direction: column; padding: 3px 3px 3px 0; }
.para { line-height: 17px; height: 85px; }
.para span { display: block; white-space: nowrap; }
.ghead { margin: 0; height: 18px; display: flex; align-items: center; font-size: 14.100px; font-weight: 700; flex: none; }
.h-info { margin-top: 6px; }
.h-champs { margin-top: 7px; }
.tri { width: 0; height: 0; border-left: 6.500px solid transparent; border-right: 6.500px solid transparent; border-top: 7.500px solid #333; margin: 0 8px 0 2px; }
.gbox { border: 1px solid #d9d6d1; border-radius: 3px; margin-top: 3px; flex: none; }
.info-box { height: 109px; padding: 10px 11px; display: flex; flex-direction: column; gap: 6px; }
.frow { display: flex; height: 25px; align-items: center; }
.frow label { width: 111px; flex: none; }
.inp { flex: 1; height: 25px; border: 1px solid #b9b6b1; border-radius: 3px; color: #bcbab6; padding-left: 2px; line-height: 23px; background: #edeae5; }
.champs-box { height: 216px; padding: 10px 11px; display: flex; flex-direction: column; }
.table { height: 163px; background: #fff; border: 1px solid #b9b6b1; flex: none; }
.thead, .trow { display: grid; grid-template-columns: 100px 100px 100px 100px 1fr; }
.thead { height: 21px; background: linear-gradient(#fbfaf8, #ece9e5); border-bottom: 1px solid #bfbcb7; }
.thead span { border-right: 1px solid #c9c6c1; padding-left: 2px; line-height: 21px; }
.thead span:last-child { border-right: 0; }
.trow { height: 17px; line-height: 17px; }
.trow span { padding-left: 3px; }
.trow span:first-child { padding-left: 23px; }
.tbl-btns { display: flex; justify-content: center; gap: 8px; margin-top: 6px; }
.btn { font: inherit; color: inherit; height: 25px; border: 1px solid #bcb9b4; border-radius: 3px; background: linear-gradient(#f2f0ec, #e6e3de); display: inline-flex; align-items: center; justify-content: center; padding: 0; flex: none; white-space: nowrap; }
.bic { width: 17px; height: 17px; flex: none; }
.ib { width: 26px; height: 24px; }
.aux-btn { width: 136px; margin: 6px 0 0 0; align-self: flex-start; padding: 0 4px; justify-content: flex-start; }
.footer { display: flex; margin: 6px 1px 0 0; gap: 6px; height: 25px; flex: none; }
.spacer { flex: 1; }
.f-aide { width: 80px; }
.f-style { width: 80px; padding: 0 4px 0 17px; justify-content: flex-start; }
.f-apply { width: 96px; }
.f-cancel { width: 78px; }
.btn-label { margin-left: 2px; }
.f-ok { width: 79px; margin-left: 5px; border-color: #2a7ab0; background: linear-gradient(#f4f6f7, #dfe6ea); gap: 2px; }
```
